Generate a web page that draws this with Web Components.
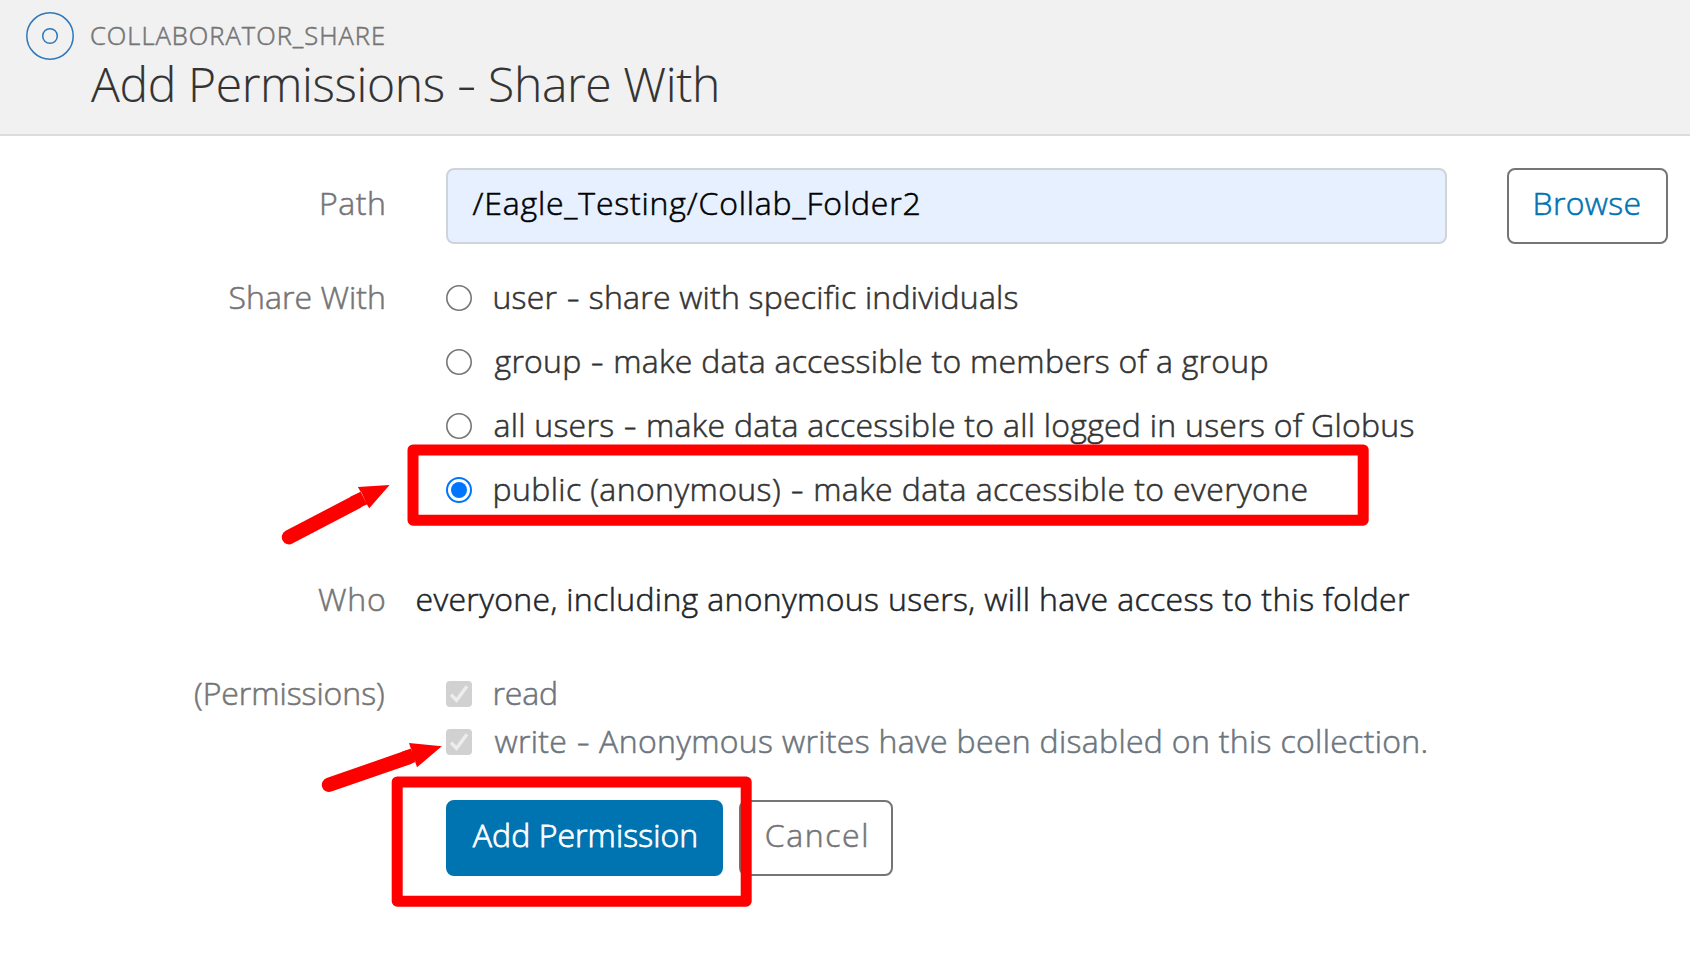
<!DOCTYPE html>
<html lang="en">
<head>
<meta charset="utf-8">
<title>Add Permissions - Share With</title>
<style>
html,body{margin:0;padding:0;background:#fff}
body{width:1690px;height:954px;overflow:hidden;font-family:"Open Sans","Noto Sans",sans-serif;font-size:32px;font-weight:300;color:#333}
</style>
</head>
<body>
<share-page></share-page>
<script>
const define = (name, html, setup) => customElements.define(name, class extends HTMLElement {
  constructor() {
    super();
    this.attachShadow({mode: 'open'}).innerHTML = html;
  }
  connectedCallback() { if (setup) setup(this, this.shadowRoot); }
});

const pen = document.createElement('canvas').getContext('2d');
const DASH_PAD = 4;

/* One line of text, tracked so that its ink spans the length given in "span". A <b> in it is a wide dash. */
define('text-run', `<style>:host{display:block;white-space:nowrap;line-height:44px;flex:none;-webkit-text-stroke:var(--heft,.55px) currentColor}span{display:block}
::slotted(b){display:inline-block;font-weight:inherit;margin:0 ${DASH_PAD / 2}px;transform:scaleX(1.25)}</style><span><slot></slot></span>`, (el, root) => {
  const cs = getComputedStyle(el), text = el.textContent;
  const span = +el.getAttribute('span');
  const pads = el.querySelectorAll('b').length * DASH_PAD;
  pen.font = `${cs.fontWeight} ${cs.fontSize} ${cs.fontFamily}`;
  const m = pen.measureText(text);
  const ink = m.actualBoundingBoxLeft + m.actualBoundingBoxRight;
  const line = root.querySelector('span');
  line.style.letterSpacing = ((span - pads - ink) / (text.length - 1)).toFixed(4) + 'px';
  line.style.marginLeft = m.actualBoundingBoxLeft.toFixed(2) + 'px';
  el.style.width = span + 'px';
});

define('page-header', `<style>
:host{display:flex;box-sizing:border-box;height:136px;background:#f1f1f1;border-bottom:2px solid #dcdcdc;padding:12px 0 0 26px;gap:17px}
svg{display:block;width:48px;height:48px}
.top{font-size:25.5px;color:#757575;margin-top:3px}
.title{--heft:.15px;font-size:48px;color:#333;margin-top:3px}
.top text-run{line-height:40px}.title text-run{line-height:52px}
</style>
<svg viewBox="0 0 48 48" fill="none" stroke="#2e77b8" stroke-width="1.5"><circle cx="24" cy="24" r="23.2"/><circle cx="24" cy="24" r="7.3"/></svg>
<div><div class="top"><text-run span="293">COLLABORATOR_SHARE</text-run></div>
<div class="title"><text-run span="626">Add Permissions <b>-</b> Share With</text-run></div></div>`);

define('form-row', `<style>
:host{display:flex;align-items:flex-start}
.label{width:384px;flex:none;display:flex;justify-content:flex-end;align-items:center;box-sizing:border-box;height:var(--row,64px);padding-bottom:2px;color:#757575}
.body{margin-left:var(--indent,62px);flex:1}
</style><div class="label"><slot name="label"></slot></div><div class="body"><slot></slot></div>`);

define('choice-item', `<style>
:host{display:flex;align-items:center;height:var(--row,64px)}
svg{width:26px;height:26px;flex:none;margin-right:22.5px}
.t{padding-bottom:2px}
:host([kind=check]) .t{color:#6c757d}
</style><svg viewBox="0 0 26 26"></svg><div class="t"><slot></slot></div>`, (el, root) => {
  const svg = root.querySelector('svg');
  if (el.getAttribute('kind') === 'check')
    svg.innerHTML = '<rect width="26" height="26" rx="4" fill="#d1d1d1"/><path d="M5 13.6 10.5 19.3 21 5.2" fill="none" stroke="#ededed" stroke-width="3.4"/>';
  else if (el.hasAttribute('checked'))
    svg.innerHTML = '<circle cx="13" cy="13" r="12" fill="#fff" stroke="#0075ff" stroke-width="2"/><circle cx="13" cy="13" r="8" fill="#0075ff"/>';
  else
    svg.innerHTML = '<circle cx="13" cy="13" r="12.2" fill="#fff" stroke="#767676" stroke-width="1.6"/>';
});

define('path-field', `<style>:host{display:flex;align-items:center;box-sizing:border-box;width:1001px;height:76px;border:2px solid #ced4da;border-radius:8px;background:#e6f0ff;color:#000;padding:0 0 6px 24.5px}</style><slot></slot>`);

define('push-button', `<style>
:host{display:flex;align-items:center;justify-content:center;box-sizing:border-box;height:76px;border:2px solid #757575;border-radius:8px;background:#fff;color:#757575;padding-bottom:6px}
:host([tone=link]){color:#0073b1}
:host([tone=primary]){background:#0073b1;border-color:#0073b1;color:#fff;--heft:.8px}
</style><slot></slot>`);

define('callout-marks', `<style>:host{position:absolute;left:0;top:0;width:1690px;height:954px;pointer-events:none}svg{display:block}</style>
<svg width="1690" height="954" viewBox="0 0 1690 954" fill="none" stroke="#f00">
<g stroke-width="11" stroke-linejoin="round"><rect x="413" y="450" width="950.2" height="70.2"/><rect x="397.2" y="782" width="349" height="119.2"/></g>
<g stroke-width="14.4" stroke-linecap="round"><path d="M289 537.2 357 501.6"/><path d="M329 784.8 408 757.4"/></g>
<g fill="#f00" stroke="none"><path d="M389.6 485 357.9 487 361 492.5 367 504.5 369.3 508.3zM361 491.5 367 504.5 356 509 350 497z"/><path d="M441.8 746.3 409 743 417 767.3zM411 748.5 415.5 762 406 765.4 402 751.8z"/></g>
</svg>`);

define('share-page', `<style>
:host{display:block;position:relative;width:1690px;height:954px}
main{padding-top:32px}
.path{--row:72px}
.line{display:flex;gap:60px}
.who{margin-top:46px;--indent:32.5px}
.note{display:flex;align-items:center;box-sizing:border-box;height:64px;padding-bottom:2px;color:#212529}
.perms{margin-top:38px;--row:48px}
.share{margin-top:22px}
.actions{display:flex;gap:16px;margin:34px 0 0 446px}
</style>
<page-header></page-header>
<main>
<form-row class="path"><text-run slot="label" span="62">Path</text-run>
<div class="line"><path-field><text-run span="447">/Eagle_Testing/Collab_Folder2</text-run></path-field><push-button tone="link" style="width:161px"><text-run span="104">Browse</text-run></push-button></div></form-row>
<form-row class="share"><text-run slot="label" span="154.5">Share With</text-run>
<choice-item><text-run span="523">user <b>-</b> share with specific individuals</text-run></choice-item>
<choice-item><text-run span="773">group <b>-</b> make data accessible to members of a group</text-run></choice-item>
<choice-item><text-run span="919">all users <b>-</b> make data accessible to all logged in users of Globus</text-run></choice-item>
<choice-item checked><text-run span="812">public (anonymous) <b>-</b> make data accessible to everyone</text-run></choice-item></form-row>
<form-row class="who"><text-run slot="label" span="66">Who</text-run>
<div class="note"><text-run span="992.5">everyone, including anonymous users, will have access to this folder</text-run></div></form-row>
<form-row class="perms"><text-run slot="label" span="189">(Permissions)</text-run>
<choice-item kind="check"><text-run span="61.5">read</text-run></choice-item>
<choice-item kind="check"><text-run span="932">write <b>-</b> Anonymous writes have been disabled on this collection.</text-run></choice-item></form-row>
<div class="actions"><push-button tone="primary" style="width:277px"><text-run span="223.5">Add Permission</text-run></push-button><push-button style="width:154px"><text-run span="100.5">Cancel</text-run></push-button></div>
</main>
<callout-marks></callout-marks>`);
</script>
</body>
</html>
